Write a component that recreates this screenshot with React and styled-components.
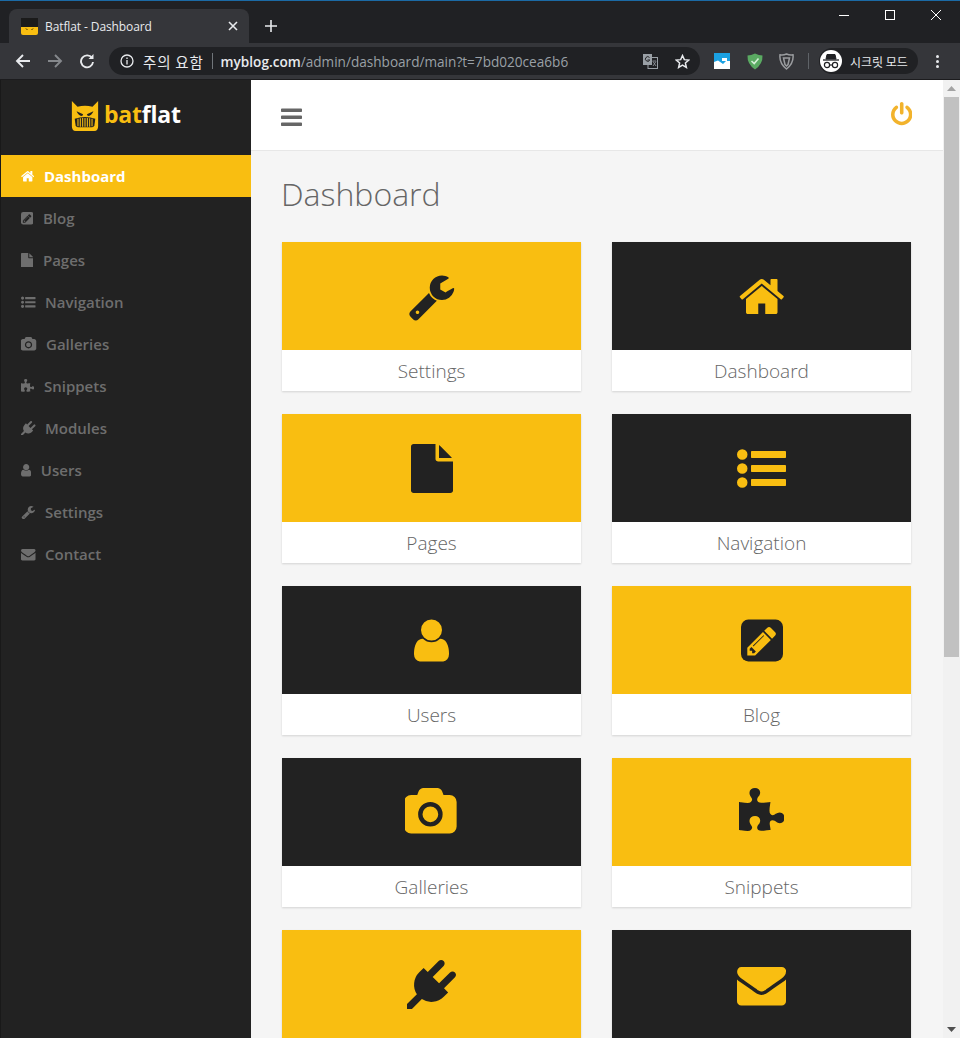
import styled, { createGlobalStyle } from "styled-components";

const YELLOW = "#f9be11";
const DARK = "#222222";

// font-awesome 4 glyph shapes, drawn on a 1792 grid
const GLYPHS = {
  home: { w: 1664, d: "M1472 992v480q0 26-19 45t-45 19h-384v-384h-256v384h-384q-26 0-45-19t-19-45v-480q0-1 .5-3t.5-3l575-474 575 474q1 2 1 6zm223-69l-62 74q-8 9-21 11h-3q-13 0-21-7l-692-577-692 577q-12 8-24 7-13-2-21-11l-62-74q-8-10-7-23.500t11-21.500l719-599q32-26 76-26t76 26l244 204v-195q0-14 9-23t23-9h192q14 0 23 9t9 23v408l219 182q10 8 11 21.500t-7 23.500z", x: 64 },
  wrench: { w: 1792, d: "M448 1472q0-26-19-45t-45-19-45 19-19 45 19 45 45 19 45-19 19-45zm644-420l-682 682q-37 37-90 37-52 0-91-37l-106-108q-38-36-38-90 0-53 38-91l681-681q39 98 114.500 173.500t173.500 114.500zm634-435q0 39-23 106-47 134-164.500 217.500t-258.500 83.500q-185 0-316.500-131.500t-131.500-316.500 131.500-316.500 316.500-131.500q58 0 121.500 16.500t107.500 46.500q16 11 16 28t-16 28l-293 169v224l193 107q5-3 79-48.500t135.500-81 70.500-35.500q15 0 23.500 10t8.500 25z", x: 0 },
  file: { w: 1536, d: "M1152 512v-472q22 14 36 28l408 408q14 14 28 36h-472zm-128 32q0 40 28 68t68 28h544v1056q0 40-28 68t-68 28h-1344q-40 0-68-28t-28-68v-1600q0-40 28-68t68-28h800v544z", x: 128 },
  list: { w: 1792, d: "M384 1408q0 80-56 136t-136 56-136-56-56-136 56-136 136-56 136 56 56 136zm0-512q0 80-56 136t-136 56-136-56-56-136 56-136 136-56 136 56 56 136zm1408 416v192q0 13-9.500 22.500t-22.500 9.500h-1216q-13 0-22.500-9.500t-9.500-22.500v-192q0-13 9.500-22.500t22.500-9.500h1216q13 0 22.500 9.500t9.500 22.500zm-1408-928q0 80-56 136t-136 56-136-56-56-136 56-136 136-56 136 56 56 136zm1408 416v192q0 13-9.500 22.500t-22.500 9.500h-1216q-13 0-22.500-9.500t-9.500-22.500v-192q0-13 9.500-22.500t22.500-9.500h1216q13 0 22.500 9.500t9.500 22.500zm0-512v192q0 13-9.500 22.500t-22.500 9.500h-1216q-13 0-22.500-9.500t-9.500-22.500v-192q0-13 9.500-22.500t22.500-9.500h1216q13 0 22.500 9.500t9.500 22.500z", x: 0 },
  user: { w: 1280, d: "M1536 1399q0 109-62.500 187t-150.500 78h-854q-88 0-150.500-78t-62.500-187q0-85 8.500-160.500t31.500-152 58.500-131 94-89 134.500-34.500q131 128 313 128t313-128q76 0 134.500 34.500t94 89 58.500 131 31.500 152 8.500 160.500zm-256-887q0 159-112.500 271.500t-271.500 112.500-271.500-112.500-112.500-271.500 112.500-271.500 271.500-112.500 271.500 112.500 112.500 271.500z", x: 256 },
  camera: { w: 1920, d: "M928 672q119 0 203.500 84.500t84.500 203.500-84.500 203.500-203.500 84.500-203.500-84.500-84.500-203.500 84.500-203.500 203.500-84.500zm704-416q106 0 181 75t75 181v896q0 106-75 181t-181 75h-1408q-106 0-181-75t-75-181v-896q0-106 75-181t181-75h224l51-136q19-49 69.500-84.500t103.500-35.500h512q53 0 103.500 35.500t69.500 84.500l51 136h224zm-704 1152q185 0 316.500-131.500t131.500-316.500-131.500-316.500-316.500-131.500-316.500 131.500-131.500 316.500 131.500 316.500 316.500 131.500z", x: 0 },
  puzzle: { w: 1664, d: "M1664 1098q0 81-44.500 135t-123.500 54q-41 0-77.500-17.500t-59-38-56.500-38-71-17.500q-110 0-110 124 0 39 16 115t15 115v5q-22 0-33 1-34 3-97.500 11.500t-115.500 13.500-98 5q-61 0-103-26.500t-42-83.500q0-37 17.500-71t38-56.500 38-59 17.500-77.500q0-79-54-123.500t-135-44.500q-84 0-143 45.500t-59 127.500q0 43 15 83t33.500 64.500 33.500 53 15 50.500q0 45-46 89-37 35-117 35-95 0-245-24-9-2-27.500-4t-27.500-4l-13-2q-2 0-4-1-2 0-2-1v-1024q2 1 17.500 3.500t34 5 21.500 3.500q150 24 245 24 80 0 117-35 46-44 46-89 0-22-15-50.500t-33.500-53-33.500-64.500-15-83q0-82 59-127.500t144-45.500q80 0 134 44.500t54 123.500q0 41-17.500 77.500t-38 59-38 56.500-17.500 71q0 57 42 83.500t103 26.500q64 0 180-15t163-17v2q-1 2-3.500 17.500t-5 34-3.500 21.500q-24 150-24 245 0 80 35 117 44 46 89 46 22 0 50.500-15t53-33.500 64.500-33.500 83-15q82 0 127.500 59t45.500 143z", x: 0 },
  plug: { w: 1792, d: "M1755 453q37 38 37 90.500t-37 90.500l-401 400 150 150-160 160q-163 163-389.500 186.500t-411.500-100.500l-362 362h-181v-181l362-362q-124-185-100.500-411.500t186.500-389.500l160-160 150 150 400-401q38-37 91-37t90 37 37 90.500-37 90.500l-400 401 234 234 401-400q38-37 91-37t90 37z", x: 0 },
  envelope: { w: 1792, d: "M1792 710v794q0 66-47 113t-113 47h-1472q-66 0-113-47t-47-113v-794q44 49 101 87 362 246 497 345 57 42 92.500 65.500t94.500 48 110 24.500h2q51 0 110-24.500t94.500-48 92.500-65.500q170-123 498-345 57-39 100-87zm0-294q0 79-49 151t-122 123q-376 261-468 325-10 7-42.500 30.500t-54 38-52 32.500-57.500 27-48 9h-2q-22 0-48-9t-57.500-27-52-32.500-54-38-42.500-30.500q-91-64-262-182.500t-205-142.500q-62-42-117-115.500t-55-136.500q0-78 41.500-130t118.500-52h1472q65 0 112.500 47t47.500 113z", x: 0 },
  bars: { w: 1536, d: "M1664 1344v128q0 26-19 45t-45 19h-1408q-26 0-45-19t-19-45v-128q0-26 19-45t45-19h1408q26 0 45 19t19 45zm0-512v128q0 26-19 45t-45 19h-1408q-26 0-45-19t-19-45v-128q0-26 19-45t45-19h1408q26 0 45 19t19 45zm0-512v128q0 26-19 45t-45 19h-1408q-26 0-45-19t-19-45v-128q0-26 19-45t45-19h1408q26 0 45 19t19 45z", x: 128 },
  power: { w: 1536, d: "M1664 896q0 156-61 298t-164 245-245 164-298 61-298-61-245-164-164-245-61-298q0-182 80.500-343t226.500-270q43-32 95.500-25t83.500 50q32 42 24.500 94.500t-49.500 84.500q-98 74-151.500 181t-53.500 228q0 104 40.500 198.500t109.500 163.500 163.500 109.500 198.500 40.500 198.500-40.500 163.500-109.500 109.500-163.500 40.500-198.500q0-121-53.500-228t-151.500-181q-42-32-49.500-84.500t24.500-94.500q31-43 84-50t95 25q146 109 226.500 270t80.500 343zm-640-768v640q0 52-38 90t-90 38-90-38-38-90v-640q0-52 38-90t90-38 90 38 38 90z", x: 128 },
};

const PENCIL = "M491 1536l91-91-235-235-91 91v107h128v128h107zm523-928q0-22-22-22-10 0-17 7l-542 542q-7 7-7 17 0 22 22 22 10 0 17-7l542-542q7-7 7-17zm-54-192l416 416-832 832h-416v-416zm683 96q0 53-37 90l-166 166-416-416 166-165q36-38 90-38 53 0 91 38l235 234q37 39 37 91z";

const NAV_ITEMS = [
  { label: "Dashboard", icon: "home", active: true },
  { label: "Blog", icon: "pencil" },
  { label: "Pages", icon: "file" },
  { label: "Navigation", icon: "list" },
  { label: "Galleries", icon: "camera" },
  { label: "Snippets", icon: "puzzle" },
  { label: "Modules", icon: "plug" },
  { label: "Users", icon: "user" },
  { label: "Settings", icon: "wrench" },
  { label: "Contact", icon: "envelope" },
];

const CARDS = [
  { label: "Settings", icon: "wrench", tone: "yellow" },
  { label: "Dashboard", icon: "home", tone: "dark" },
  { label: "Pages", icon: "file", tone: "yellow" },
  { label: "Navigation", icon: "list", tone: "dark" },
  { label: "Users", icon: "user", tone: "dark" },
  { label: "Blog", icon: "pencil", tone: "yellow" },
  { label: "Galleries", icon: "camera", tone: "dark" },
  { label: "Snippets", icon: "puzzle", tone: "yellow" },
  { label: "Modules", icon: "plug", tone: "yellow" },
  { label: "Contact", icon: "envelope", tone: "dark" },
];

function Glyph({ name, size, cut }) {
  if (name === "pencil") {
    // rounded square with the pencil knocked out in the colour behind it
    return (
      <svg width={(1536 / 1792) * size} height={size} viewBox="0 0 1536 1792">
        <rect y="128" width="1536" height="1536" rx="270" fill="currentColor" />
        <path d={PENCIL} fill={cut} transform="translate(142 300) scale(0.69)" />
      </svg>
    );
  }
  const g = GLYPHS[name];
  const w = (g.w / 1792) * size;
  return (
    <svg width={w} height={size} viewBox={`${g.x} 0 ${g.w} 1792`} fill="currentColor">
      <path d={g.d} />
    </svg>
  );
}

function BatLogo({ size }) {
  return (
    <svg width={size} height={size} viewBox="0 0 30 32">
      <path
        d="M1 0 L7 6 Q15 4 23 6 L29 0 V27 Q29 32 25 32 H5 Q1 32 1 27 Z"
        fill={YELLOW}
      />
      <path d="M6 11 L13 14 L12 16 Q8 16 6 11 Z M24 11 L17 14 L18 16 Q22 16 24 11 Z" fill={DARK} />
      <path d="M4 19 Q15 15 26 19 L25 26 Q24 28 22 28 H8 Q6 28 5 26 Z" fill={DARK} />
      <path
        d="M7.500 19 V27 M10 18.500 V27.500 M12.500 18 V27.500 M15 18 V27.500 M17.500 18 V27.500 M20 18.500 V27.500 M22.500 19 V27"
        stroke={YELLOW}
        strokeWidth="1.100"
      />
    </svg>
  );
}

function Favicon() {
  return (
    <svg width="17" height="17" viewBox="0 0 17 17">
      <rect y="0" width="17" height="9" fill="#1b1b1b" />
      <path d="M0 9 H17 V15 Q17 17 15 17 H2 Q0 17 0 15 Z" fill={YELLOW} />
      <path d="M4 10 L7 11.500 L6 12 Z M13 10 L10 11.500 L11 12 Z" fill="#3a2c00" />
    </svg>
  );
}

function App() {
  return (
    <Frame>
      <GlobalStyle />
      <BlueLine />
      <TabStrip>
        <Tab>
          <Favicon />
          <TabTitle>Batflat - Dashboard</TabTitle>
          <svg width="10" height="10" viewBox="0 0 10 10" stroke="#e8eaed" strokeWidth="1.600">
            <path d="M1 1 L9 9 M9 1 L1 9" />
          </svg>
        </Tab>
        <NewTab>
          <svg width="12" height="12" viewBox="0 0 12 12" stroke="#e8eaed" strokeWidth="1.600">
            <path d="M6 0 V12 M0 6 H12" />
          </svg>
        </NewTab>
        <WindowButtons>
          <svg width="12" height="12" viewBox="0 0 12 12" stroke="#fff" strokeWidth="1">
            <path d="M1 6.500 H11" />
          </svg>
          <svg width="12" height="12" viewBox="0 0 12 12" stroke="#fff" strokeWidth="1" fill="none">
            <rect x="1.500" y="1.500" width="9" height="9" />
          </svg>
          <svg width="12" height="12" viewBox="0 0 12 12" stroke="#fff" strokeWidth="1">
            <path d="M1 1 L11 11 M11 1 L1 11" />
          </svg>
        </WindowButtons>
      </TabStrip>
      <Toolbar>
        <NavButtons>
          <svg width="16" height="16" viewBox="0 0 16 16" fill="none" stroke="#e8eaed" strokeWidth="1.900">
            <path d="M15 8 H2 M8 2 L2 8 L8 14" />
          </svg>
          <svg width="16" height="16" viewBox="0 0 16 16" fill="none" stroke="#85888c" strokeWidth="1.900">
            <path d="M1 8 H14 M8 2 L14 8 L8 14" />
          </svg>
          <svg width="16" height="16" viewBox="0 0 16 16" fill="none" stroke="#e8eaed" strokeWidth="1.900">
            <path d="M13 5 A6 6 0 1 0 14 9" />
            <path d="M14.500 1 V6 H9.500 Z" fill="#e8eaed" stroke="none" />
          </svg>
        </NavButtons>
        <Omnibox>
          <svg width="14" height="14" viewBox="0 0 14 14" fill="none" stroke="#e8eaed" strokeWidth="1.300">
            <circle cx="7" cy="7" r="6" />
            <path d="M7 6 V10.500 M7 3.500 V5" />
          </svg>
          <Warning>주의 요함</Warning>
          <OmniDivider />
          <Url>
            <strong>myblog.com</strong>/admin/dashboard/main?t=7bd020cea6b6
          </Url>
          <OmniIcons>
            <svg width="15" height="15" viewBox="0 0 15 15">
              <rect x="5" y="3.500" width="9.500" height="11" fill="#202124" stroke="#9aa0a6" />
              <rect x="0" y="0" width="9" height="11" fill="#9aa0a6" />
              <path d="M6.500 3.500 A2.300 2.300 0 1 0 6.800 6 H4.500" fill="none" stroke="#202124" />
              <path d="M9.500 7 H13 M10 12 L13 7.500 M10 7.500 L13 12" stroke="#9aa0a6" fill="none" strokeWidth=".8" />
            </svg>
            <svg width="15" height="15" viewBox="0 0 24 24" fill="none" stroke="#e8eaed" strokeWidth="2.400">
              <path d="M12 2.500 L14.900 9 L22 9.700 L16.600 14.400 L18.200 21.400 L12 17.700 L5.800 21.400 L7.400 14.400 L2 9.700 L9.100 9 Z" />
            </svg>
          </OmniIcons>
        </Omnibox>
        <Extensions>
          <svg width="16" height="16" viewBox="0 0 16 16">
            <rect width="16" height="16" fill="#1ba1e2" />
            <path d="M0 9 L4 7.500 L9 11 L12 8 H16 V16 H0 Z" fill="#fff" />
            <rect x="8" y="5" width="5" height="3" fill="#fff" />
          </svg>
          <svg width="16" height="17" viewBox="0 0 16 17">
            <path d="M8 0.500 Q12 2.500 15.500 2.500 Q16 11 8 16.500 Q0 11 0.500 2.500 Q4 2.500 8 0.500 Z" fill="#5aaa62" />
            <path d="M4.500 8 L7.200 10.500 L11.500 5.500" fill="none" stroke="#d6f0d8" strokeWidth="1.600" />
          </svg>
          <svg width="15" height="17" viewBox="0 0 15 17" fill="none" stroke="#9a9c9f">
            <path d="M7.500 1 Q11 2.500 14 1.800 Q15 10 7.500 16 Q0 10 1 1.800 Q4 2.500 7.500 1 Z" strokeWidth="1.500" />
            <path d="M4.500 5 H10.500 L9 11.500 L7.500 13 L6 11.500 Z" strokeWidth="1.500" />
          </svg>
        </Extensions>
        <ToolbarDivider />
        <IncognitoPill>
          <IncognitoFace>
            <svg width="18" height="16" viewBox="0 0 18 16" fill="none" stroke="#202124">
              <path d="M4 6 L5 1.500 H13 L14 6 Z" fill="#202124" />
              <path d="M1 7 H17" strokeWidth="1.300" />
              <circle cx="5" cy="12" r="2.600" strokeWidth="1.200" />
              <circle cx="13" cy="12" r="2.600" strokeWidth="1.200" />
              <path d="M7.600 12 H10.400" strokeWidth="1.200" />
            </svg>
          </IncognitoFace>
          <IncognitoLabel>시크릿 모드</IncognitoLabel>
        </IncognitoPill>
        <Kebab>
          <i />
          <i />
          <i />
        </Kebab>
      </Toolbar>
      <Viewport>
        <Sidebar>
          <Brand>
            <BatLogo size={30} />
            <BrandName>
              bat<span>flat</span>
            </BrandName>
          </Brand>
          <NavList>
            {NAV_ITEMS.map((item) => (
              <NavItem key={item.label} $active={item.active}>
                <Glyph name={item.icon} size={14.5} cut={DARK} />
                {item.label}
              </NavItem>
            ))}
          </NavList>
        </Sidebar>
        <Main>
          <TopBar>
            <MenuButton>
              <Glyph name="bars" size={24.5} />
            </MenuButton>
            <PowerButton>
              <Glyph name="power" size={25} />
            </PowerButton>
          </TopBar>
          <Content>
            <PageTitle>Dashboard</PageTitle>
            <CardGrid>
              {CARDS.map((card) => (
                <Card key={card.label}>
                  <CardTop $tone={card.tone}>
                    <Glyph name={card.icon} size={49} cut={card.tone === "dark" ? DARK : YELLOW} />
                  </CardTop>
                  <CardLabel>{card.label}</CardLabel>
                </Card>
              ))}
            </CardGrid>
          </Content>
        </Main>
        <Scrollbar>
          <ScrollArrow>
            <svg width="9" height="5" viewBox="0 0 9 5" fill="#a3a3a3">
              <path d="M0 5 L4.500 0 L9 5 Z" />
            </svg>
          </ScrollArrow>
          <ScrollThumb />
          <ScrollArrow>
            <svg width="9" height="5" viewBox="0 0 9 5" fill="#505050">
              <path d="M0 0 L4.500 5 L9 0 Z" />
            </svg>
          </ScrollArrow>
        </Scrollbar>
      </Viewport>
    </Frame>
  );
}

const GlobalStyle = createGlobalStyle`
  html, body {
    margin: 0;
    padding: 0;
    height: 100%;
    overflow: hidden;
    background-color: #202124;
  }
  * {
    box-sizing: border-box;
  }
`;

const Frame = styled.div`
  width: 960px;
  height: 1038px;
  display: flex;
  flex-direction: column;
  overflow: hidden;
  font-family: "Open Sans", "Noto Sans CJK KR", sans-serif;
`;

const BlueLine = styled.div`
  height: 1px;
  background-color: #1b6aa5;
  flex-shrink: 0;
`;

const TabStrip = styled.div`
  height: 42px;
  flex-shrink: 0;
  display: flex;
  align-items: flex-end;
  padding-left: 9px;
  background-color: #202124;
`;

const Tab = styled.div`
  width: 240px;
  height: 34px;
  display: flex;
  align-items: center;
  padding: 0 11px 0 12px;
  gap: 7px;
  background-color: #35363a;
  border-radius: 8px 8px 0 0;
`;

const TabTitle = styled.span`
  flex: 1;
  font-family: "Open Sans", sans-serif;
  font-size: 12px;
  letter-spacing: -0.1px;
  color: #e8eaed;
`;

const NewTab = styled.div`
  width: 44px;
  height: 34px;
  display: flex;
  align-items: center;
  justify-content: center;
`;

const WindowButtons = styled.div`
  margin-left: auto;
  align-self: flex-start;
  width: 104px;
  margin-right: 18px;
  padding-top: 8px;
  display: flex;
  justify-content: space-between;
`;

const Toolbar = styled.div`
  height: 37px;
  flex-shrink: 0;
  display: flex;
  align-items: center;
  background-color: #35363a;
  border-bottom: 1px solid #1c1c1e;
`;

const NavButtons = styled.div`
  width: 109px;
  padding: 0 14px 0 15px;
  display: flex;
  justify-content: space-between;
  flex-shrink: 0;
`;

const Omnibox = styled.div`
  width: 591px;
  height: 28px;
  flex-shrink: 0;
  display: flex;
  align-items: center;
  padding: 0 10px 0 11px;
  border-radius: 14px;
  background-color: #202124;
`;

const Warning = styled.span`
  margin-left: 9px;
  font-family: "Noto Sans CJK KR", sans-serif;
  font-size: 14.500px;
  letter-spacing: 0.8px;
  color: #e8eaed;
`;

const OmniDivider = styled.span`
  width: 1px;
  height: 16px;
  margin: 0 8px;
  background-color: #70757a;
`;

const Url = styled.span`
  flex: 1;
  font-family: "Open Sans", sans-serif;
  font-size: 13.600px;
  color: #9aa0a6;
  white-space: nowrap;

  strong {
    font-weight: 600;
    color: #e8eaed;
  }
`;

const OmniIcons = styled.div`
  display: flex;
  align-items: center;
  gap: 17px;
`;

const Extensions = styled.div`
  margin-left: 14px;
  width: 80px;
  flex-shrink: 0;
  display: flex;
  align-items: center;
  justify-content: space-between;
`;

const ToolbarDivider = styled.span`
  width: 1px;
  height: 16px;
  margin: 0 10px 0 14px;
  background-color: #5f6368;
`;

const IncognitoPill = styled.div`
  width: 99px;
  height: 26px;
  flex-shrink: 0;
  display: flex;
  align-items: center;
  padding-left: 1px;
  gap: 8px;
  border-radius: 13px;
  background-color: #202124;
`;

const IncognitoFace = styled.span`
  width: 22px;
  height: 22px;
  display: flex;
  align-items: center;
  justify-content: center;
  border-radius: 50%;
  background-color: #fff;
`;

const IncognitoLabel = styled.span`
  font-family: "Noto Sans CJK KR", sans-serif;
  font-size: 12px;
  color: #e8eaed;
  white-space: nowrap;
`;

const Kebab = styled.div`
  margin-left: 18px;
  display: flex;
  flex-direction: column;
  gap: 2px;

  i {
    width: 3px;
    height: 3px;
    border-radius: 50%;
    background-color: #e8eaed;
  }
`;

const Viewport = styled.div`
  flex: 1;
  min-height: 0;
  display: flex;
`;

const Sidebar = styled.aside`
  width: 251px;
  flex-shrink: 0;
  border-left: 1px solid #191919;
  background-color: ${DARK};
`;

const Brand = styled.div`
  height: 75px;
  display: flex;
  align-items: center;
  padding: 0 0 4px 69px;
  gap: 4px;
`;

const BrandName = styled.span`
  margin-top: -3px;
  font-size: 23px;
  font-weight: 700;
  letter-spacing: -0.2px;
  color: ${YELLOW};

  span {
    color: #fff;
  }
`;

const NavList = styled.nav`
  display: flex;
  flex-direction: column;
`;

const NavItem = styled.a`
  height: 42px;
  display: flex;
  align-items: center;
  gap: 9.500px;
  padding-left: 20px;
  font-size: 15px;
  font-weight: ${(p) => (p.$active ? 700 : 600)};
  color: ${(p) => (p.$active ? "#fff" : "#6e6e6e")};
  background-color: ${(p) => (p.$active ? YELLOW : "transparent")};
`;

const Main = styled.main`
  flex: 1;
  min-width: 0;
  display: flex;
  flex-direction: column;
  background-color: #f5f5f5;
`;

const TopBar = styled.header`
  height: 71px;
  flex-shrink: 0;
  display: flex;
  align-items: center;
  justify-content: space-between;
  padding: 0 31px 0 30px;
  background-color: #fff;
  border-bottom: 1px solid #e7e7e7;
`;

const MenuButton = styled.div`
  display: flex;
  padding-top: 4px;
  color: #666;
`;

const PowerButton = styled.div`
  display: flex;
  margin-top: -1px;
  color: #f2b32c;
`;

const Content = styled.div`
  flex: 1;
  min-height: 0;
  overflow: hidden;
  padding: 21px 31px 0;
`;

const PageTitle = styled.h1`
  margin: 0 0 26px -1px;
  font-size: 32px;
  font-weight: 300;
  line-height: 44px;
  color: #666;
`;

const CardGrid = styled.div`
  display: grid;
  grid-template-columns: 299px 299px;
  column-gap: 31px;
  row-gap: 23px;
`;

const Card = styled.div`
  height: 149px;
  background-color: #fff;
  box-shadow: 0 1px 2px rgba(0, 0, 0, 0.14);
`;

const CardTop = styled.div`
  height: 108px;
  display: flex;
  align-items: center;
  justify-content: center;
  background-color: ${(p) => (p.$tone === "dark" ? DARK : YELLOW)};
  color: ${(p) => (p.$tone === "dark" ? YELLOW : DARK)};
`;

const CardLabel = styled.div`
  height: 41px;
  line-height: 42px;
  text-align: center;
  font-size: 19px;
  font-weight: 300;
  color: #666;
`;

const Scrollbar = styled.div`
  width: 17px;
  flex-shrink: 0;
  display: flex;
  flex-direction: column;
  background-color: #f1f1f1;
`;

const ScrollArrow = styled.div`
  height: 17px;
  display: flex;
  align-items: center;
  justify-content: center;
`;

const ScrollThumb = styled.div`
  width: 15px;
  height: 560px;
  margin: 0 auto auto;
  background-color: #c1c1c1;
`;

export default App;
